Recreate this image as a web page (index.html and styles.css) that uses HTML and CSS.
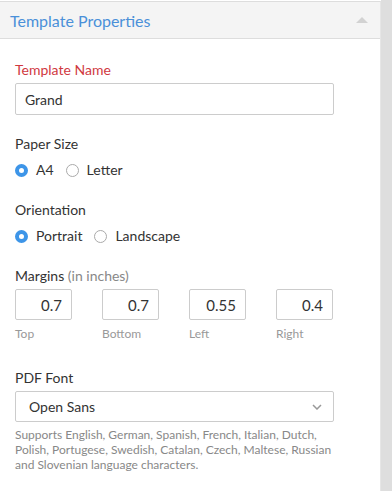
FILE: index.html
```html
<!DOCTYPE html>
<html lang="en">
<head>
  <meta charset="UTF-8">
  <title>Template Properties</title>
  <link rel="stylesheet" href="styles.css">
</head>
<body>
  <div class="pagina">
    <div class="panell">
      <div class="capcalera">
        <span class="titol">Template Properties</span>
        <span class="fletxa"></span>
      </div>
      <div class="cos">
        <div class="camp">
          <label class="etiqueta obligatori">Template Name</label>
          <input class="entrada" type="text" value="Grand">
        </div>

        <div class="camp">
          <label class="etiqueta">Paper Size</label>
          <div class="opcions">
            <span class="opcio"><span class="radio marcat"></span>A4</span>
            <span class="opcio"><span class="radio"></span>Letter</span>
          </div>
        </div>

        <div class="camp">
          <label class="etiqueta">Orientation</label>
          <div class="opcions">
            <span class="opcio"><span class="radio marcat"></span>Portrait</span>
            <span class="opcio"><span class="radio"></span>Landscape</span>
          </div>
        </div>

        <div class="camp ample">
          <label class="etiqueta">Margins <span class="suau">(in inches)</span></label>
          <div class="marges">
            <div class="marge"><input class="entrada petita" type="text" value="0.7"><span class="nota">Top</span></div>
            <div class="marge"><input class="entrada petita" type="text" value="0.7"><span class="nota">Bottom</span></div>
            <div class="marge"><input class="entrada petita" type="text" value="0.55"><span class="nota">Left</span></div>
            <div class="marge"><input class="entrada petita" type="text" value="0.4"><span class="nota">Right</span></div>
          </div>
        </div>

        <div class="camp">
          <label class="etiqueta">PDF Font</label>
          <div class="selector">
            <span>Open Sans</span>
            <svg width="10" height="6" viewBox="0 0 10 6"><path d="M1 1 L5 5 L9 1" fill="none" stroke="#999" stroke-width="1.5"/></svg>
          </div>
          <p class="ajuda">Supports English, German, Spanish, French, Italian, Dutch, Polish, Portugese, Swedish, Catalan, Czech, Maltese, Russian and Slovenian language characters.</p>
        </div>
      </div>
    </div>
    <div class="barra"></div>
  </div>
</body>
</html>
```

FILE: styles.css
```css
body {
  margin: 0;
  background: #fff;
  font-family: Lato, "Liberation Sans", sans-serif;
  color: #333;
}

.pagina {
  display: flex;
  height: 491px;
  overflow: hidden;
}

.panell {
  width: 380px;
  border-top: 1px solid #ddd;
  margin-top: 1px;
  border-right: 1px solid #e6e6e6;
}

.barra {
  flex: 1;
  background: #dedede;
}

/* --------------- Capçalera ----------------- */

.capcalera {
  display: flex;
  align-items: center;
  justify-content: space-between;
  height: 36px;
  padding: 0 10px;
  background: #f4f4f4;
  border-bottom: 1px solid #ddd;
}

.titol {
  font-size: 16px;
  color: #4a90d9;
}

.fletxa {
  width: 0;
  height: 0;
  margin-right: 2px;
  border-left: 6px solid transparent;
  border-right: 6px solid transparent;
  border-bottom: 6px solid #d2d2d2;
}

/* --------------- Cos ----------------- */

.cos {
  padding: 22px 15px 0 15px;
}

.camp {
  margin-bottom: 20px;
}

.camp.ample {
  margin-bottom: 28px;
}

.etiqueta {
  display: block;
  font-size: 14px;
  line-height: 18px;
  margin-bottom: 4px;
}

.obligatori {
  color: #d0393f;
}

.suau {
  color: #888;
}

.entrada {
  box-sizing: border-box;
  width: 319px;
  height: 32px;
  padding: 0 9px;
  border: 1px solid #ccc;
  border-radius: 2px;
  font-family: inherit;
  font-size: 14px;
  color: #333;
  outline: none;
}

.opcions {
  display: flex;
  gap: 12px;
  font-size: 14px;
  line-height: 18px;
  padding: 4px 0 2px 0;
}

.opcio {
  display: flex;
  align-items: center;
}

.radio {
  box-sizing: border-box;
  width: 13px;
  height: 13px;
  margin-right: 8px;
  border-radius: 50%;
  border: 1px solid #aaa;
  background: #fff;
}

.radio.marcat {
  border: 4px solid #3d95e8;
  background: #fff;
}

.marges {
  display: flex;
  gap: 30px;
}

.marge {
  display: flex;
  flex-direction: column;
}

.entrada.petita {
  width: 57px;
  height: 31px;
  text-align: right;
  font-size: 15px;
}

.nota {
  font-size: 12px;
  color: #999;
  margin-top: 6px;
}

.selector {
  box-sizing: border-box;
  display: flex;
  align-items: center;
  justify-content: space-between;
  width: 319px;
  height: 31px;
  padding: 0 11px 0 13px;
  border: 1px solid #ccc;
  border-radius: 2px;
  font-size: 14px;
}

.ajuda {
  width: 322px;
  margin: 5px 0 0 0;
  font-size: 12px;
  line-height: 15px;
  color: #888;
}
```
